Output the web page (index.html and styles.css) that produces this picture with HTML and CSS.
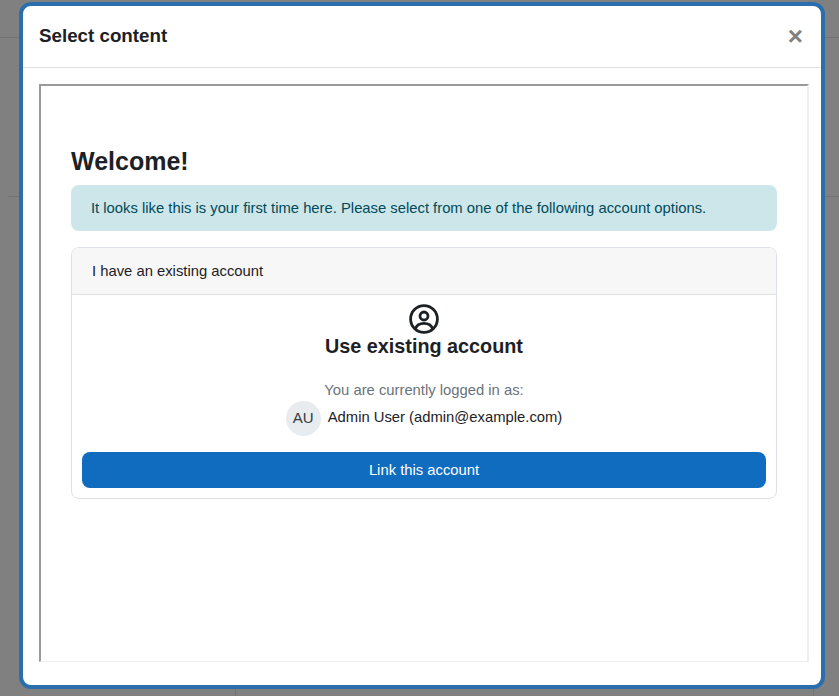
FILE: index.html
```html
<!DOCTYPE html>
<html lang="en">
<head>
<meta charset="utf-8">
<title>Select content</title>
<link rel="stylesheet" href="styles.css">
</head>
<body>
<div class="bg-line bg-line-a"></div>
<div class="bg-line bg-line-b"></div>
<div class="bg-line bg-line-c"></div>
<div class="bg-line bg-line-d"></div>
<div class="modal">
  <header class="modal-header">
    <h1 class="modal-title">Select content</h1>
    <button class="close" type="button" aria-label="Close">×</button>
  </header>
  <div class="modal-body">
    <div class="frame">
      <h2 class="welcome">Welcome!</h2>
      <div class="alert">It looks like this is your first time here. Please select from one of the following account options.</div>
      <section class="card">
        <div class="card-header">I have an existing account</div>
        <div class="card-body">
          <svg class="user-icon" viewBox="0 0 30 30" width="30" height="30" fill="none" stroke="#1d2125" stroke-width="2.8" aria-hidden="true">
            <circle cx="15" cy="15" r="13.4"/>
            <circle cx="15" cy="12" r="4"/>
            <path d="M6.5 24.5c1.2-3.6 4-5.2 8.500-5.200s7.300 1.600 8.500 5.200"/>
          </svg>
          <h3 class="card-title">Use existing account</h3>
          <p class="muted">You are currently logged in as:</p>
          <div class="user-row">
            <span class="avatar">AU</span>
            <span class="user-name">Admin User (admin@example.com)</span>
          </div>
          <button class="primary" type="button">Link this account</button>
        </div>
      </section>
    </div>
  </div>
</div>
</body>
</html>
```
FILE: styles.css
```css
* { box-sizing: border-box; }
html, body { margin: 0; height: 696px; overflow: hidden; }
body {
  position: relative;
  background: #808080;
  font-family: "Liberation Sans", Arial, sans-serif;
  color: #1d2125;
  font-size: 14.8px;
  padding: 2px 14px 0 19px;
}
.bg-line { position: absolute; background: #737373; }
.bg-line-a { left: 0; right: 0; top: 37px; height: 1px; }
.bg-line-b { left: 8px; right: 0; top: 196px; height: 1px; }
.bg-line-c { left: 235px; top: 689px; width: 1px; height: 7px; }
.bg-line-d { left: 813px; top: 689px; width: 1px; height: 7px; }
.modal {
  position: relative;
  width: 806px;
  height: 687px;
  background: #fff;
  border: 4px solid #2a6ead;
  border-radius: 12px;
  display: flex;
  flex-direction: column;
}
.modal-header {
  height: 62px;
  flex: none;
  display: flex;
  align-items: center;
  justify-content: space-between;
  padding: 0 18px 2px 16px;
  border-bottom: 1px solid #dee2e6;
}
.modal-title { margin: 0; font-size: 18.75px; font-weight: 700; color: #1d2125; }
.close {
  border: 0;
  padding: 0;
  background: none;
  font: 700 26px/1 "Liberation Sans", Arial, sans-serif;
  color: #808080;
}
.modal-body { flex: 1; padding: 16px 12px 23px 16px; display: flex; }
.frame {
  flex: 1;
  border-style: solid;
  border-width: 2px 2px 1px 2px;
  border-color: #9a9a9a #eeeeee #eeeeee #9a9a9a;
  padding: 60px 30px 0 30px;
}
.welcome { margin: 0 0 9px; font-size: 25px; line-height: 30px; font-weight: 700; }
.alert {
  height: 46px;
  padding: 0 20px;
  display: flex;
  align-items: center;
  background: #cce6ea;
  color: #004a59;
  border-radius: 8px;
  margin-bottom: 16px;
}
.card { border: 1px solid #dee2e6; border-radius: 8px; overflow: hidden; }
.card-header {
  height: 47px;
  padding: 0 20px;
  display: flex;
  align-items: center;
  background: #f7f7f7;
  border-bottom: 1px solid #dee2e6;
}
.card-body {
  padding: 9px 10px 10px;
  display: flex;
  flex-direction: column;
  align-items: center;
}
.user-icon { display: block; }
.card-title { margin: 0; font-size: 19.8px; line-height: 24px; font-weight: 700; }
.muted { margin: 21px 0 0; color: #6a737b; line-height: 22px; }
.user-row { display: flex; align-items: flex-start; gap: 7px; height: 35px; margin: 0 0 16px; }
.avatar {
  width: 35px;
  height: 35px;
  padding-bottom: 2px;
  border-radius: 50%;
  background: #e9ecef;
  color: #343a40;
  display: flex;
  align-items: center;
  justify-content: center;
  font-size: 15px;
}
.user-name { line-height: 22px; padding-top: 5px; }
.primary {
  width: 100%;
  height: 36px;
  border: 0;
  border-radius: 8px;
  background: #0f6cbf;
  color: #fff;
  font: 14.8px "Liberation Sans", Arial, sans-serif;
}
```
